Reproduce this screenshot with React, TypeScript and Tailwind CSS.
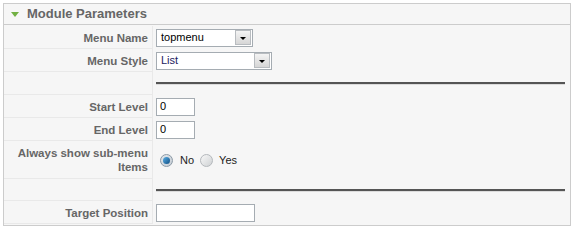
import React from "react";

const font = "font-['Liberation_Sans',Arial,sans-serif]";

const Arrow = () => (
  <span className="ml-auto flex h-[15px] w-[16px] items-end justify-center border border-[#b8bcc0] bg-gradient-to-b from-[#f4f4f4] to-[#d6d6d6] pb-[4px]">
    <span className="h-0 w-0 border-x-[3px] border-t-[3px] border-x-transparent border-t-black" />
  </span>
);

const Select = ({ value, width, blue }: { value: string; width: string; blue?: boolean }) => (
  <div className={`flex h-[18px] items-center border border-[#a5acb2] bg-white pl-[4px] pr-px text-[11px] ${width} ${blue ? "text-[#1a1a60]" : "text-black"}`}>
    <span>{value}</span>
    <Arrow />
  </div>
);

const TextInput = ({ value, width }: { value?: string; width: string }) => (
  <div className={`flex h-[18px] items-center border border-[#a5acb2] bg-white pl-[3px] text-[11px] text-black ${width}`}>
    {value}
  </div>
);

const Radio = ({ checked }: { checked?: boolean }) =>
  checked ? (
    <span className="flex h-[13px] w-[13px] shrink-0 items-center justify-center rounded-full border border-[#8c9aa6] bg-gradient-to-br from-[#e4e8ec] to-[#c4ccd4]">
      <span className="block h-[7px] w-[7px] rounded-full bg-gradient-to-br from-[#5ab0e6] to-[#0d4f85]" />
    </span>
  ) : (
    <span className="block h-[13px] w-[13px] shrink-0 rounded-full border border-[#b4b8bc] bg-gradient-to-br from-[#f8f8f8] to-[#cfd2d4]" />
  );

const Rule = () => (
  <div className="mr-[5px] w-full border-t-2 border-b border-t-[#555] border-b-[#dcdcdc]" />
);

const Row = ({ label, height, children }: { label?: React.ReactNode; height: string; children?: React.ReactNode }) => (
  <div className={`flex ${height}`}>
    <div className="flex w-[149px] shrink-0 items-center justify-end border-r border-b border-[#e9e9e9] px-[4px] pt-px text-right text-[11.5px] leading-[14px] font-bold text-[#666]">
      {label}
    </div>
    <div className="flex flex-1 items-center pl-[3px]">{children}</div>
  </div>
);

export default function App() {
  return (
    <div className={`h-[230px] w-[574px] bg-white p-[3px] ${font}`}>
      <div className="w-[568px] border border-[#ccc] bg-[#f6f6f6]">
        <div className="flex h-[21px] items-center border-b border-[#ccc] pl-[7px]">
          <span className="h-0 w-0 border-x-[4px] border-t-[5px] border-x-transparent border-t-[#72b043]" />
          <h3 className="ml-[8px] text-[13px] font-bold text-[#666]">Module Parameters</h3>
        </div>
        <div className="pt-px pb-px">
          <Row label="Menu Name" height="h-[23px]">
            <Select value="topmenu" width="w-[97px]" />
          </Row>
          <Row label="Menu Style" height="h-[23px]">
            <Select value="List" width="w-[116px]" blue />
          </Row>
          <Row height="h-[23px]">
            <Rule />
          </Row>
          <Row label="Start Level" height="h-[23px]">
            <TextInput value="0" width="w-[39px]" />
          </Row>
          <Row label="End Level" height="h-[23px]">
            <TextInput value="0" width="w-[39px]" />
          </Row>
          <Row label="Always show sub-menu Items" height="h-[38px]">
            <div className="flex items-center pl-[4px] text-[11px] text-[#222]">
              <Radio checked />
              <span className="ml-[7px]">No</span>
              <span className="ml-[6px]">
                <Radio />
              </span>
              <span className="ml-[6px]">Yes</span>
            </div>
          </Row>
          <Row height="h-[22px]">
            <Rule />
          </Row>
          <Row label="Target Position" height="h-[23px]">
            <TextInput width="w-[99px]" />
          </Row>
        </div>
      </div>
    </div>
  );
}
